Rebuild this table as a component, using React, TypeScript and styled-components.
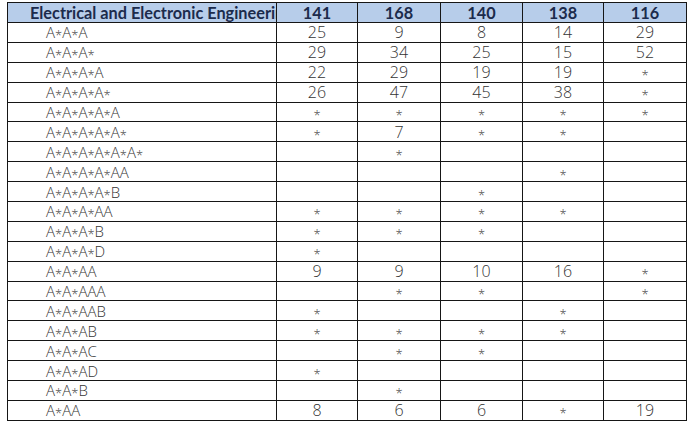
import React from "react";
import styled, { createGlobalStyle } from "styled-components";

const GlobalStyle = createGlobalStyle`
  html, body {
    margin: 0;
    padding: 0;
    background: #ffffff;
  }
`;

const Page = styled.div`
  padding: 2px 0 0 7px;
  overflow: hidden;
  height: 423px;
  box-sizing: border-box;
`;

const Table = styled.table`
  border-collapse: collapse;
  table-layout: fixed;
  width: 679px;
`;

const Col = styled.col<{ $w: number }>`
  width: ${(p) => p.$w}px;
`;

const HeadRow = styled.tr`
  height: 20px;
  background: #b7cdea;
`;

const Row = styled.tr`
  height: 19.9px;
`;

const HeadCell = styled.th<{ $left?: boolean }>`
  border: 1px solid #161616;
  padding: ${(p) => (p.$left ? "0 0 0 22px" : "0")};
  text-align: ${(p) => (p.$left ? "left" : "center")};
  font-family: Lato, "Open Sans", sans-serif;
  font-weight: 700;
  font-size: 16.3px;
  line-height: 18px;
  color: #1c2b4c;
  white-space: nowrap;
  overflow: hidden;
  text-overflow: clip;
`;

const Cell = styled.td<{ $label?: boolean }>`
  border: 1px solid #161616;
  padding: ${(p) => (p.$label ? "1px 0 0 38px" : "1px 0 0 0")};
  text-align: ${(p) => (p.$label ? "left" : "center")};
  font-family: "Open Sans", "Liberation Sans", sans-serif;
  font-weight: 300;
  font-size: ${(p) => (p.$label ? "15px" : "16px")};
  line-height: 17px;
  color: #333333;
  white-space: nowrap;
  overflow: hidden;
`;

const Star = styled.span`
  display: inline-block;
  font-size: 13px;
  line-height: 10px;
  color: #444444;
  transform: translateY(2px);
`;

const cols = ["141", "168", "140", "138", "116"];
const widths = [269, 81, 83, 82, 81, 83];

const rows: [string, string[]][] = [
  ["A*A*A", ["25", "9", "8", "14", "29"]],
  ["A*A*A*", ["29", "34", "25", "15", "52"]],
  ["A*A*A*A", ["22", "29", "19", "19", "*"]],
  ["A*A*A*A*", ["26", "47", "45", "38", "*"]],
  ["A*A*A*A*A", ["*", "*", "*", "*", "*"]],
  ["A*A*A*A*A*", ["*", "7", "*", "*", ""]],
  ["A*A*A*A*A*A*", ["", "*", "", "", ""]],
  ["A*A*A*A*AA", ["", "", "", "*", ""]],
  ["A*A*A*A*B", ["", "", "*", "", ""]],
  ["A*A*A*AA", ["*", "*", "*", "*", ""]],
  ["A*A*A*B", ["*", "*", "*", "", ""]],
  ["A*A*A*D", ["*", "", "", "", ""]],
  ["A*A*AA", ["9", "9", "10", "16", "*"]],
  ["A*A*AAA", ["", "*", "*", "", "*"]],
  ["A*A*AAB", ["*", "", "", "*", ""]],
  ["A*A*AB", ["*", "*", "*", "*", ""]],
  ["A*A*AC", ["", "*", "*", "", ""]],
  ["A*A*AD", ["*", "", "", "", ""]],
  ["A*A*B", ["", "*", "", "", ""]],
  ["A*AA", ["8", "6", "6", "*", "19"]],
];

// grades are drawn with a small, light asterisk
const Grade = ({ text }: { text: string }) => (
  <>
    {text.split("").map((ch, i) =>
      ch === "*" ? <Star key={i}>*</Star> : <React.Fragment key={i}>{ch}</React.Fragment>
    )}
  </>
);

const App = () => {
  return (
    <>
      <GlobalStyle />
      <Page>
        <Table>
          <colgroup>
            {widths.map((w, i) => (
              <Col key={i} $w={w} />
            ))}
          </colgroup>
          <thead>
            <HeadRow>
              <HeadCell $left>Electrical and Electronic Engineering</HeadCell>
              {cols.map((c) => (
                <HeadCell key={c}>{c}</HeadCell>
              ))}
            </HeadRow>
          </thead>
          <tbody>
            {rows.map(([grade, vals]) => (
              <Row key={grade}>
                <Cell $label>
                  <Grade text={grade} />
                </Cell>
                {vals.map((v, i) => (
                  <Cell key={i}>{v === "*" ? <Star>*</Star> : v}</Cell>
                ))}
              </Row>
            ))}
          </tbody>
        </Table>
      </Page>
    </>
  );
};

export default App;
